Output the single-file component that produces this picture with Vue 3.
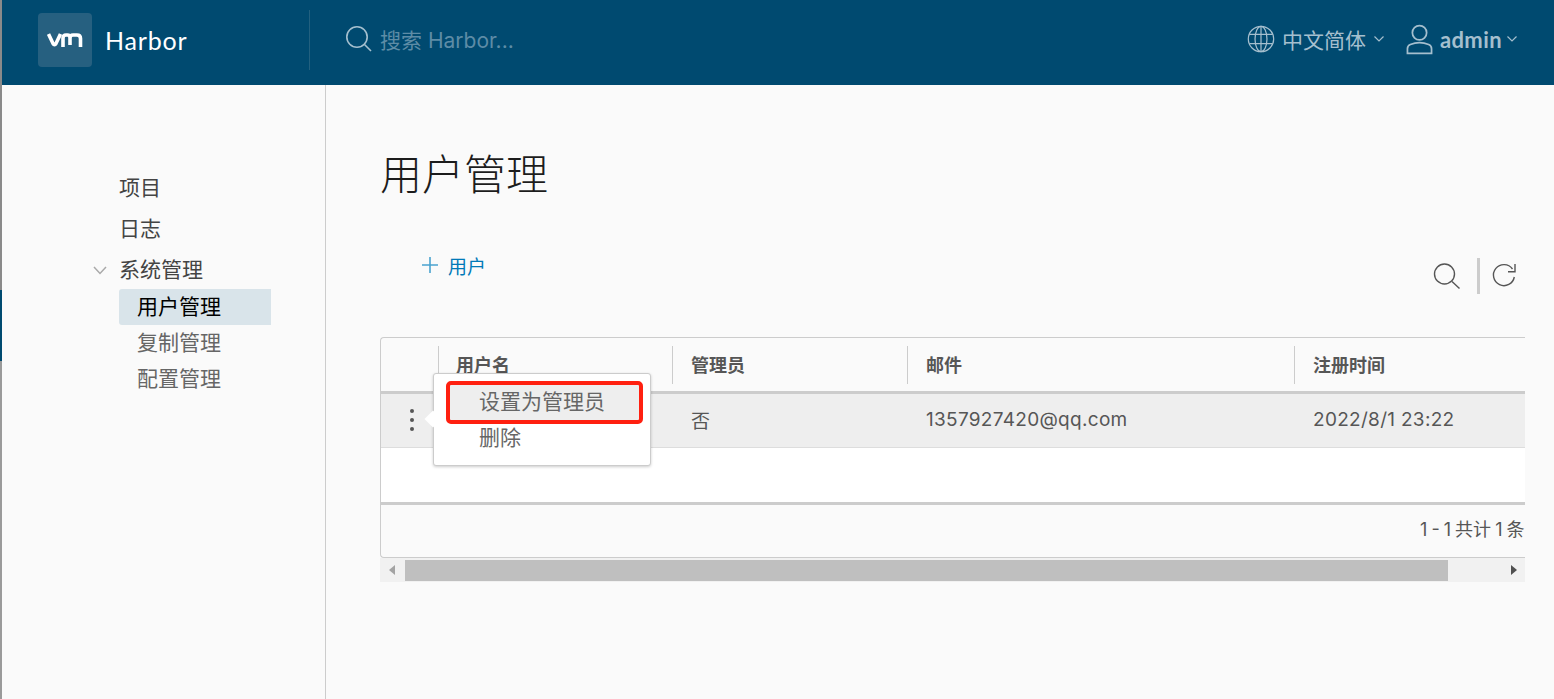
<script setup>
const navTop = [
  { label: '项目' },
  { label: '日志' },
];
const navSub = [
  { label: '用户管理', active: true },
  { label: '复制管理' },
  { label: '配置管理' },
];
const cols = ['用户名', '管理员', '邮件', '注册时间'];
</script>

<template>
  <div class="page">
    <div class="edge"></div>
    <div class="shell">
      <header class="top">
        <div class="brand">
          <div class="logo">
            <svg width="36" height="16" viewBox="0 0 36 16" fill="none" stroke="#fff" stroke-width="3.6">
              <path d="M1.5 2 L6 11.5 Q7.5 14 9 11.5 L13.5 2" />
              <path d="M16 15 V6 Q16 3 19 3 H20.5 Q23 3 23 6 V13 M23 6 Q23 3 26 3 H30 Q33.5 3 33.5 6.5 V15" />
            </svg>
          </div>
          <span class="brand-name">Harbor</span>
        </div>
        <div class="search">
          <svg width="30" height="28" viewBox="0 0 30 28" fill="none" stroke="#a5c0cf" stroke-width="1.6">
            <circle cx="12" cy="12" r="10.2" />
            <path d="M19.5 19.5 L26 26" />
          </svg>
          <span class="search-text">搜索 Harbor...</span>
        </div>
        <div class="right">
          <div class="lang">
            <svg width="28" height="28" viewBox="0 0 30 30" fill="none" stroke="#a5bfce" stroke-width="1.3">
              <circle cx="15" cy="15" r="13.6" />
              <ellipse cx="15" cy="15" rx="6.4" ry="13.6" />
              <path d="M15 1.5 V28.5 M2.5 10 H27.5 M2.5 20 H27.5" />
            </svg>
            <span class="lang-text">中文简体</span>
            <svg class="chev" width="12" height="8" viewBox="0 0 12 8" fill="none" stroke="#a5bfce" stroke-width="1.2">
              <path d="M1.5 1.5 L6 6 L10.5 1.5" />
            </svg>
          </div>
          <div class="user">
            <svg width="27" height="31" viewBox="0 0 28 32" fill="none" stroke="#a5bfce" stroke-width="1.8">
              <circle cx="14" cy="9" r="7.4" />
              <path d="M1.5 30.5 V25.5 Q1.5 22.5 4.5 21.2 Q14 17.5 23.5 21.2 Q26.5 22.5 26.5 25.5 V30.5 Z" />
            </svg>
            <span class="user-text">admin</span>
            <svg class="chev" width="12" height="8" viewBox="0 0 12 8" fill="none" stroke="#a5bfce" stroke-width="1.2">
              <path d="M1.5 1.5 L6 6 L10.5 1.5" />
            </svg>
          </div>
        </div>
      </header>

      <div class="body">
        <nav class="side">
          <a v-for="n in navTop" :key="n.label" class="nav-item">{{ n.label }}</a>
          <div class="nav-group">
            <svg class="group-chev" width="14" height="9" viewBox="0 0 14 9" fill="none" stroke="#a9a9a9" stroke-width="1.5">
              <path d="M1 1 L7 7.5 L13 1" />
            </svg>
            <span>系统管理</span>
          </div>
          <div class="sub">
            <a v-for="n in navSub" :key="n.label" class="sub-item" :class="{ active: n.active }">{{ n.label }}</a>
          </div>
        </nav>

        <main class="main">
          <h1 class="title">用户管理</h1>
          <div class="toolbar">
            <div class="add">
              <svg width="16" height="16" viewBox="0 0 16 16" stroke="#4aa3cf" stroke-width="1.6">
                <path d="M8 0 V16 M0 8 H16" />
              </svg>
              <span>用户</span>
            </div>
            <div class="tools">
              <svg width="28" height="27" viewBox="0 0 28 27" fill="none" stroke="#555" stroke-width="1.4">
                <circle cx="11.5" cy="11" r="10" />
                <path d="M19 18.5 L26.5 25.5" />
              </svg>
              <span class="tool-sep"></span>
              <svg class="refresh" width="24" height="24" viewBox="0 0 24 24" fill="none" stroke="#555" stroke-width="1.4">
                <path d="M19.5 5 A10.5 10.5 0 1 0 21.3 13" />
                <path d="M22 0 V7.7 H15" />
              </svg>
            </div>
          </div>

          <div class="grid-wrap">
            <div class="grid">
              <div class="row head">
                <div class="cell first"></div>
                <div v-for="c in cols" :key="c" class="cell">
                  <span class="sep"></span>{{ c }}
                </div>
              </div>
              <div class="row data">
                <div class="cell first">
                  <span class="dots"><i></i><i></i><i></i></span>
                </div>
                <div class="cell"></div>
                <div class="cell">否</div>
                <div class="cell">1357927420@qq.com</div>
                <div class="cell">2022/8/1 23:22</div>
              </div>
              <div class="blank"></div>
              <div class="foot"><span>1 - 1 共计 1 条</span></div>

              <div class="pop">
                <span class="pop-arrow"></span>
                <div class="pop-item hover">设置为管理员</div>
                <div class="pop-item">删除</div>
                <span class="mark"></span>
              </div>
            </div>
            <div class="scroll">
              <span class="arrow-l"></span>
              <span class="thumb"></span>
              <span class="arrow-r"></span>
            </div>
          </div>
        </main>
      </div>
    </div>
  </div>
</template>

<style>
html, body { margin: 0; background: #fafafa; overflow: hidden; }
</style>

<style scoped>
.page {
  display: flex;
  width: 1554px;
  height: 699px;
  overflow: hidden;
  background: #fafafa;
  font-family: "Inter", "Noto Sans CJK SC", sans-serif;
  color: #565656;
}
.edge {
  width: 2px;
  flex: none;
  background: linear-gradient(to bottom, #8a8a8a 0, #8a8a8a 290px, #004a70 290px, #004a70 361px, #9a9a9a 361px);
}
.shell { flex: 1; display: flex; flex-direction: column; min-width: 0; }
.top {
  height: 85px;
  flex: none;
  background: #004a70;
  display: flex;
  align-items: center;
}
.brand {
  width: 308px;
  height: 60px;
  flex: none;
  box-sizing: border-box;
  border-right: 1px solid #22607f;
  padding-left: 36px;
  margin-top: -5px;
  display: flex;
  align-items: center;
}
.logo {
  width: 54px;
  height: 54px;
  border-radius: 4px;
  background: #266080;
  display: flex;
  align-items: center;
  justify-content: center;
}
.brand-name { margin-left: 13px; margin-top: -1px; font-size: 25px; color: #fff; letter-spacing: .8px; font-family: "Lato", sans-serif; font-weight: 400; }
.search { margin-left: 35px; display: flex; align-items: center; color: #5d8ca6; flex: 1; margin-top: -7px; }
.search-text { margin-left: 5px; font-size: 21px; }
.right { display: flex; align-items: center; color: #a5bfce; margin-right: 36px; margin-top: -7px; }
.lang, .user { display: flex; align-items: center; }
.lang-text { font-size: 21px; margin-left: 7px; }
.chev { margin-left: 7px; }
.user { margin-left: 21px; }
.user-text { font-size: 22px; font-weight: 700; margin-left: 7px; letter-spacing: .4px; font-family: "Lato", sans-serif; }
.user .chev { margin-left: 4px; }

.body { flex: 1; display: flex; min-height: 0; }
.side {
  width: 324px;
  flex: none;
  box-sizing: border-box;
  border-right: 1px solid #ccc;
  padding: 82px 0 0 117px;
  color: #444;
  font-size: 21px;
}
.nav-item { display: block; height: 41px; line-height: 41px; }
.nav-group { position: relative; height: 42px; line-height: 42px; }
.group-chev { position: absolute; left: -26px; top: 17px; }
.sub { margin-top: -2px; }
.sub-item {
  display: block;
  width: 134px;
  height: 36px;
  line-height: 36px;
  padding-left: 18px;
  border-radius: 3px 0 0 3px;
  color: #666;
}
.sub-item.active { background: #d9e4ea; color: #000; }

.main { flex: 1; min-width: 0; padding: 65px 29px 0 54px; box-sizing: border-box; }
.title { margin: 0; font-size: 42px; font-weight: 300; line-height: 50px; color: #1c1c1c; }
.toolbar {
  margin-top: 50px;
  height: 87px;
  display: flex;
  justify-content: space-between;
  align-items: flex-start;
}
.add { margin-left: 42px; height: 30px; display: flex; align-items: center; color: #0079b8; font-size: 19px; gap: 10px; }
.tools { display: flex; align-items: center; margin-right: 8px; margin-top: 8px; }
.tool-sep { width: 3px; height: 36px; background: #ccc; margin: 0 13px 0 16px; }
.refresh { overflow: visible; }

.grid-wrap { width: 1145px; }
.grid {
  position: relative;
  height: 221px;
  box-sizing: border-box;
  border: 1px solid #ccc;
  border-right: 0;
  border-radius: 4px 0 0 4px;
  background: #fafafa;
  display: flex;
  flex-direction: column;
}
.row { display: grid; grid-template-columns: 57px 234px 235px 387px 1fr; white-space: nowrap; overflow: hidden; }
.head { height: 53px; box-sizing: content-box; border-bottom: 3px solid #ccc; color: #565656; font-size: 18px; font-weight: 700; flex: none; }
.head .cell { padding-bottom: 2px; }
.head .cell:nth-child(2) { padding-left: 18px; }
.data { height: 53px; background: #eee; border-bottom: 1px solid #ddd; font-size: 19px; letter-spacing: .3px; flex: none; }
.data .cell { padding-bottom: 2px; }
.cell { position: relative; display: flex; align-items: center; padding-left: 19px; }
.cell.first { padding-left: 0; justify-content: center; }
.sep { position: absolute; left: 0; top: 8px; height: 38px; width: 1px; background: #ccc; }
.dots { display: flex; flex-direction: column; gap: 5px; margin-left: 4px; }
.dots i { width: 4px; height: 4px; border-radius: 50%; background: #555; }
.blank { height: 54px; background: #fff; border-bottom: 3px solid #ccc; flex: none; }
.foot {
  flex: 1;
  overflow: hidden;
  padding: 0 0 7px 1039px;
  white-space: nowrap;
  display: flex;
  align-items: center;
  font-size: 18px;
  word-spacing: -1px;
  color: #565656;
}
.pop {
  position: absolute;
  left: 52px;
  top: 35px;
  width: 218px;
  height: 93px;
  box-sizing: border-box;
  background: #fff;
  border: 1px solid #ccc;
  border-radius: 3px;
  box-shadow: 0 1px 3px rgba(0,0,0,.2);
  padding-top: 10px;
  font-size: 21px;
  color: #666;
}
.pop-arrow {
  position: absolute;
  left: -7px;
  top: 39px;
  width: 12px;
  height: 12px;
  background: #fff;
  transform: rotate(45deg);
}
.pop-item { position: relative; height: 36px; line-height: 36px; padding-left: 45px; }
.pop-item.hover { background: #eee; margin: 0 7px 0 13px; padding-left: 32px; }
.mark {
  position: absolute;
  left: 12px;
  top: 7px;
  width: 197px;
  height: 43px;
  box-sizing: border-box;
  border: 4px solid #ff2010;
  border-radius: 5px;
}
.scroll {
  height: 24px;
  background: #f1f1f1;
  display: flex;
  align-items: center;
  position: relative;
}
.thumb { position: absolute; left: 25px; top: 2px; width: 1043px; height: 21px; background: #bfbfbf; }
.arrow-l, .arrow-r { position: absolute; top: 7px; width: 0; height: 0; border-top: 5px solid transparent; border-bottom: 5px solid transparent; }
.arrow-l { left: 9px; border-right: 6px solid #a3a3a3; }
.arrow-r { right: 8px; border-left: 6px solid #505050; }
</style>
